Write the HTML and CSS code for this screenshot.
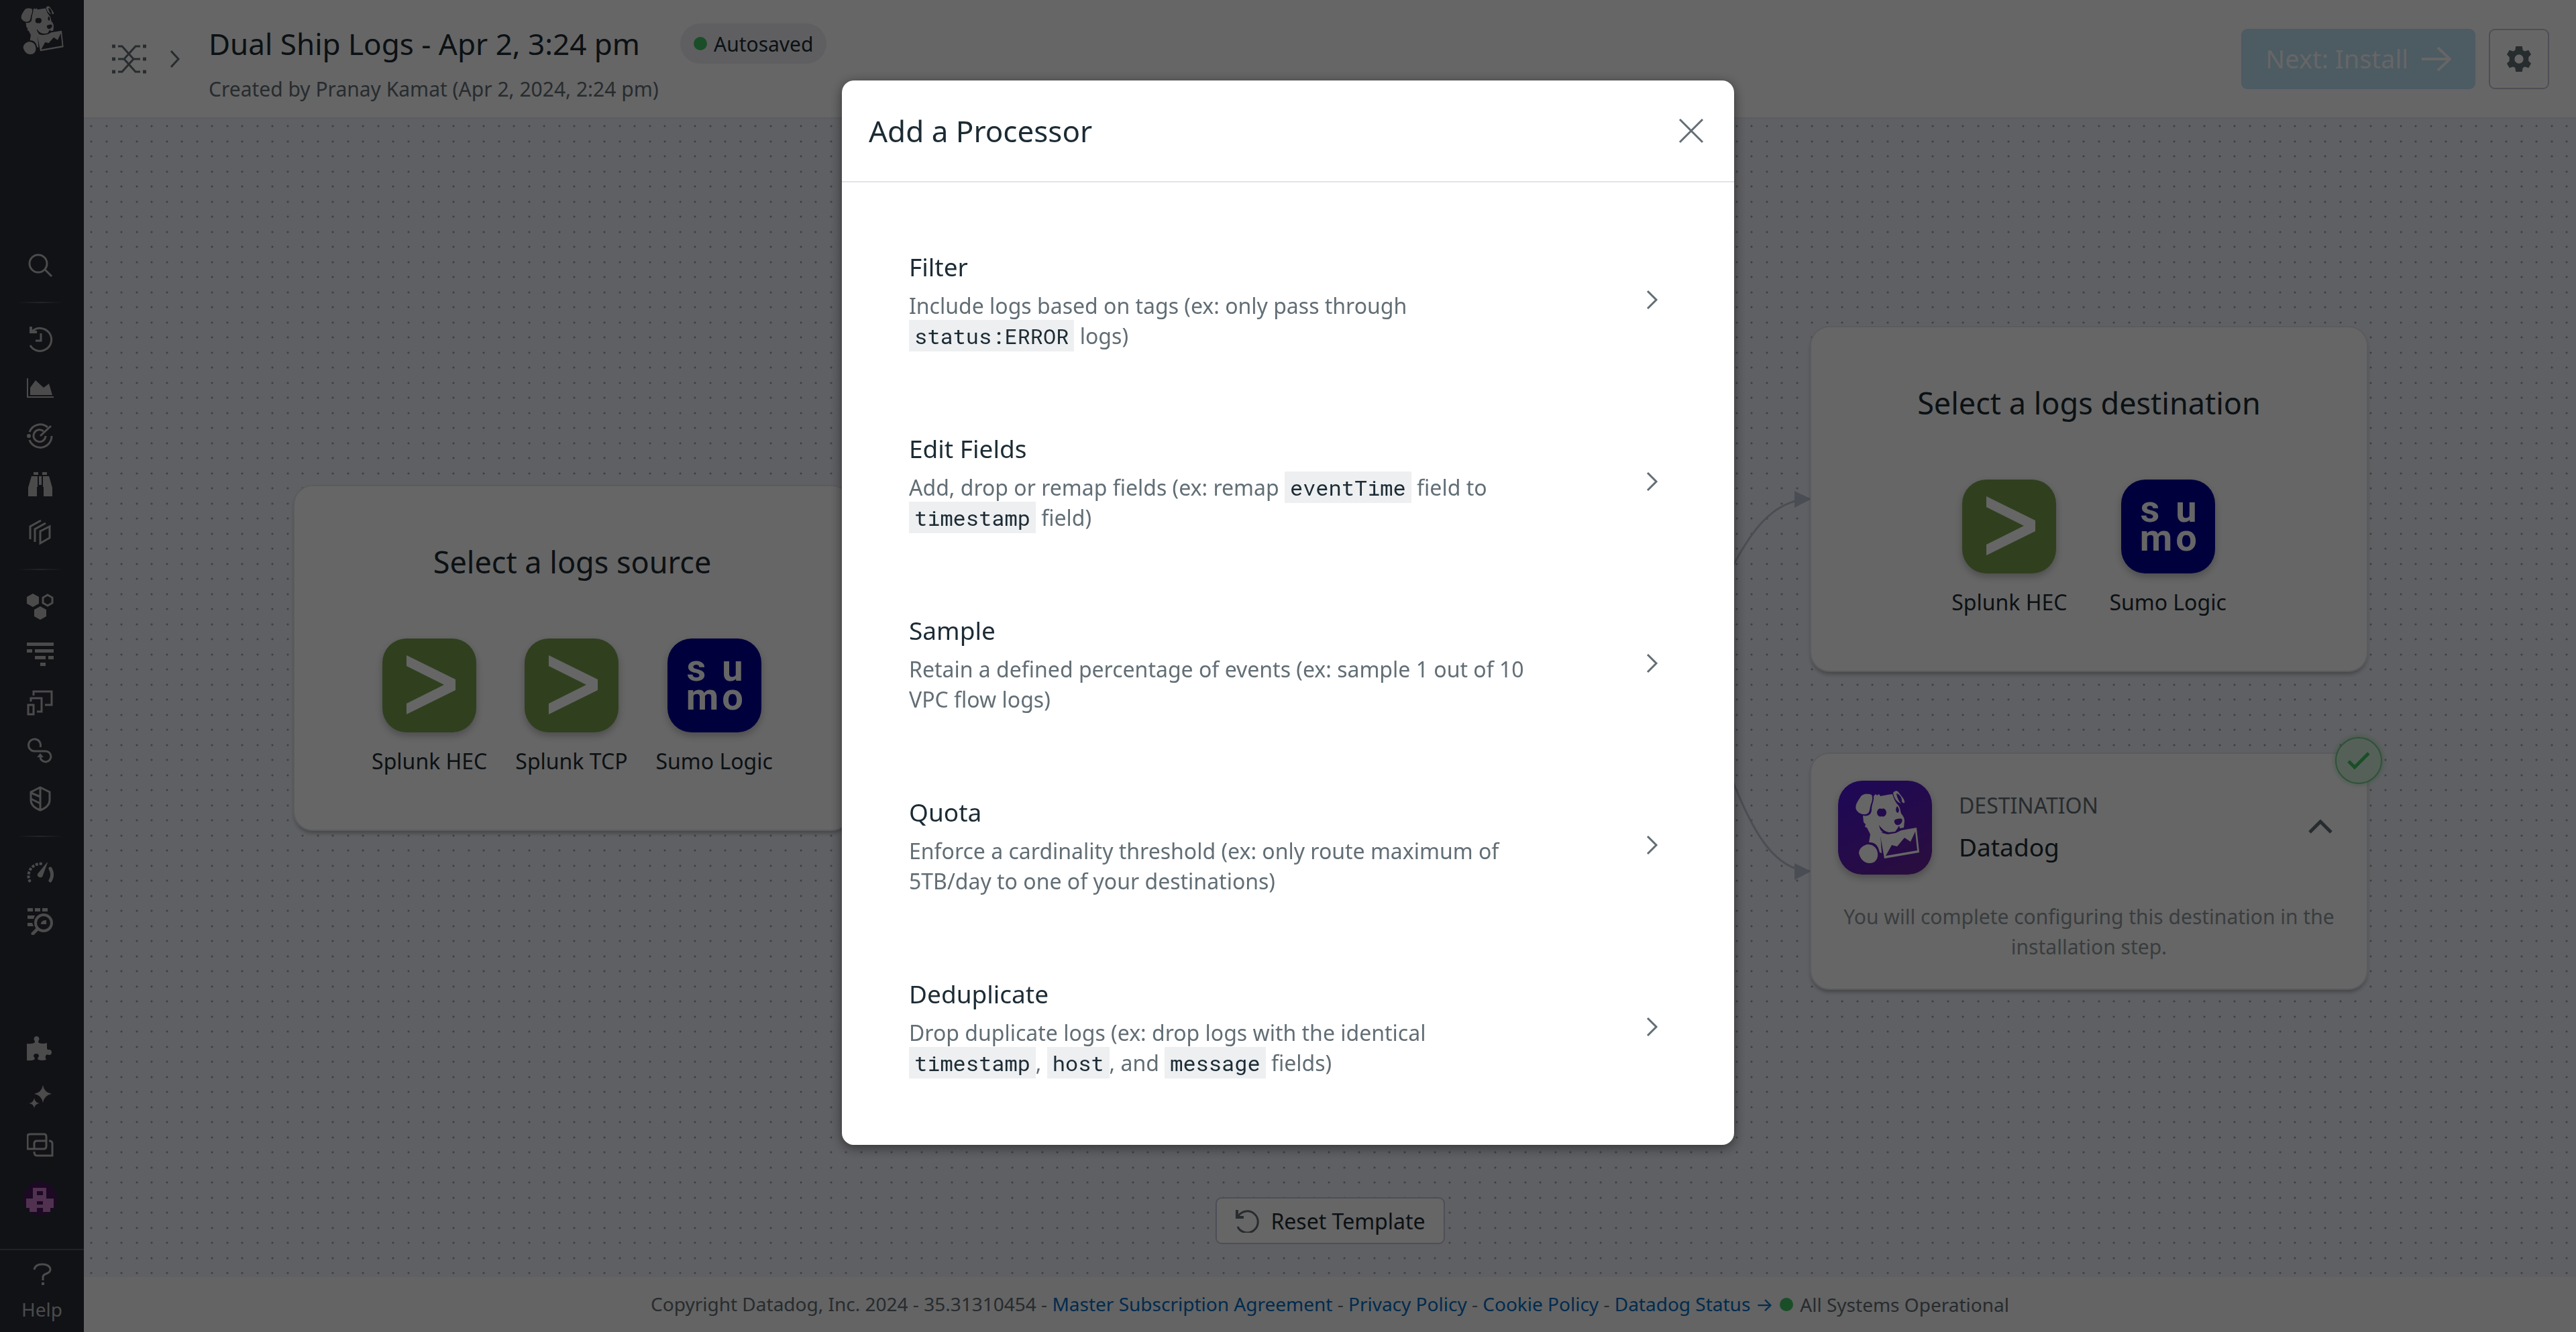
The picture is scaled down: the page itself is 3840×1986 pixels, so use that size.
FILE: index.html
```html
<!DOCTYPE html>
<html lang="en">

<head>
    <meta charset="UTF-8">
    <meta name="viewport" content="width=device-width, initial-scale=1.0">
    <title>Dual Ship Logs</title>
    <link rel="stylesheet" href="styles.css">
</head>

<body>

    <!-- shared shapes -->
    <svg class="defs" aria-hidden="true">
        <symbol id="dog" viewBox="26 15 95 108">
            <path d="M50 21 C44 19 36 19 33 25 C28 32 25 38 27 43 C30 49 38 52 44 49 C48 46 47 40 49 35 C51 30 52 25 50 21 Z" />
            <path fill-rule="evenodd" d="M53 23 L56 20 L58 22 L61 20 L63 23 L74 21 L81 20 C83 27 86 33 90 37 C93 41 93 46 94 49 C97 52 99 56 99 60 L98 70 L92 71 L91 67 L88 72 L85 76 L76 77 C70 76 65 72 61 66 C62 72 64 75 67 77 L63 78 L65 108 L62 107 C60 96 54 91 46 92 L48 80 L43 70 L40 69 L41 65 L38 62 L37 52 C46 54 50 49 50 43 C50 35 54 30 53 23 Z M65 42 A5 6 0 1 0 65 53 A5 6 0 1 0 65 42 Z M88 38 C85 42 86 47 89 48 C92 46 91 41 88 38 Z M84 59 C83 63 86 67 90 66 C94 65 97 60 95 57 C91 56 86 57 84 59 Z" />
            <path d="M82 18 C84 15 88 14 90 17 C94 23 100 28 99 33 C97 34 96 32 95 31 C96 25 90 19 87 19 C88 26 91 31 94 34 C87 32 83 25 82 18 Z" />
            <path d="M43 95 C36 97 31 102 31 108 C33 116 38 123 47 123 C56 123 60 116 59 108 C58 100 52 94 43 95 Z" />
            <path fill-rule="evenodd" d="M62 77 L74 80 L86 78 L94 74 L117 70 L121 107 L69 116 Z M71 112 L80 96 L88 98 L99 85 L108 91 L115 76 L118 104 Z" />
        </symbol>
        <symbol id="splunk" viewBox="0 0 140 140">
            <path fill="#fff" d="M36 25 L109 61 V77 L36 113 V97 L92 69 L36 41 Z" />
        </symbol>
        <symbol id="chevron" viewBox="0 0 36 36">
            <path d="M7 5 L20 18 L7 31" fill="none" stroke="currentColor" stroke-width="3" />
        </symbol>
    </svg>

    <div class="app">

        <nav class="sidebar">
            <a href="#" class="logo" aria-label="Home"><svg><use href="#dog" /></svg></a>

            <div class="navTop">
                <a href="#" aria-label="Search"><svg viewBox="0 0 40 40"><circle cx="17" cy="17" r="13" fill="none" stroke="currentColor" stroke-width="3" /><path class="line" d="M27 26 L37 36" /></svg></a>
                <hr>
                <a href="#" aria-label="Recent"><svg viewBox="0 0 40 40"><path class="line" d="M5 29 A17 17 0 1 0 8 8" /><path class="line" d="M6 1 V9 H15" stroke-width="4" /><path class="line" d="M21 11 V22 H13" /></svg></a>
                <a href="#" aria-label="Dashboards"><svg viewBox="0 0 40 40"><path class="line" d="M1 6 V34 H40" stroke-width="2" /><path d="M5 31 V20 L13 9 L25 20 L33 14 L38 31 Z" /></svg></a>
                <a href="#" aria-label="Monitors"><svg viewBox="0 0 40 40"><circle cx="3" cy="20" r="3" /><path class="line" d="M4 14 A17 17 0 0 1 31 7 M37 20 A17 17 0 0 1 4 26 M28 20 A9 9 0 1 1 25 13 M20 20 L36 5" /></svg></a>
                <a href="#" aria-label="Watchdog"><svg viewBox="0 0 40 40"><path d="M10 2 H17 V6 H10 Z M23 2 H30 V6 H23 Z M18 8 H22 V21 H18 Z M7 8 H16 V24 H15 V38 H2 V25 Z M24 8 H33 L38 25 V38 H25 V24 H24 Z" /></svg></a>
                <a href="#" aria-label="Service catalog"><svg viewBox="0 0 40 40"><path class="line" d="M5 30 V11 L21 2 M12 34 V15 L28 6 M20 18 L34 11 V28 L20 36 Z" /></svg></a>
                <hr>
                <a href="#" aria-label="Infrastructure"><svg viewBox="0 0 40 40"><path d="M9 1 L18 6 V16 L9 21 L0 16 V6 Z M20 20 L29 25 V35 L20 40 L11 35 V25 Z" /><path class="line" d="M31 3 L38 7 V15 L31 19 L24 15 V7 Z" /></svg></a>
                <a href="#" aria-label="APM"><svg viewBox="0 0 40 40"><path d="M0 2 H40 V7 H0 Z M0 12 H8 V17 H0 Z M12 12 H40 V17 H12 Z M12 22 H28 V27 H12 Z M32 22 H40 V27 H32 Z M20 32 H28 V37 H20 Z" /></svg></a>
                <a href="#" aria-label="Digital experience"><svg viewBox="0 0 40 40"><path class="line" d="M10 9 V3 H37 V23 H27 M6 18 V13 H22 V33 H15 M2 23 H10 V37 H2 Z" /></svg></a>
                <a href="#" aria-label="CI"><svg viewBox="0 0 40 40"><path class="line" d="M20 14 A9 9 0 1 0 11 20 H28 A8 8 0 1 1 20 29" /><path d="M15 29 L20 23 L25 29 Z" /></svg></a>
                <a href="#" aria-label="Security"><svg viewBox="0 0 40 40"><path class="line" d="M20 2 L34 9 V21 C34 29 28 33 20 36 C12 33 6 29 6 21 V9 Z M20 2 V36 M6 10 L20 16 M6 19 L20 26" /></svg></a>
                <hr>
                <a href="#" aria-label="Metrics"><svg viewBox="0 0 40 40"><path class="line" d="M5 33 A18 18 0 0 1 23 6" stroke-width="4" stroke-dasharray="4 2" /><path d="M31 4 L24 23 A4 4 0 0 1 16 21 L30 4 Z" /><path class="line" d="M35 13 C39 20 38 26 35 31" stroke-width="5" stroke-linecap="round" /></svg></a>
                <a href="#" aria-label="Logs"><svg viewBox="0 0 40 40"><path d="M1 0 H9 V5 H1 Z M12 0 H20 V5 H12 Z M23 0 H31 V5 H23 Z M1 11 H12 L10 16 H1 Z M1 22 H8 L10 27 H1 Z M21 24 C21 19 25 18 29 18 V24 Z" /><circle cx="25" cy="22" r="12" fill="none" stroke="currentColor" stroke-width="4" /><path class="line" d="M16 31 L9 38" stroke-width="5" stroke-linecap="round" /></svg></a>
            </div>

            <div class="navBottom">
                <a href="#" aria-label="Integrations"><svg viewBox="0 0 40 40"><path d="M0 13 Q6 14 11 12 Q13 10 11 8 A4 4 0 1 1 18 8 Q16 10 18 12 Q24 14 30 12 V19 Q30 23 33 22 A4 4 0 1 1 33 30 Q30 28 28 31 Q27 34 29 37 Q23 39 17 37 Q15 35 18 32 A4 4 0 1 0 10 32 Q13 35 11 37 Q6 39 0 38 Z" /></svg></a>
                <a href="#" aria-label="Bits AI"><svg viewBox="0 0 40 40"><path d="M24 3 Q26 14 37 16 Q26 18 24 29 Q22 18 11 16 Q22 14 24 3 Z M11 22 Q12 29 19 30 Q12 31 11 37 Q10 31 3 30 Q10 29 11 22 Z" /></svg></a>
                <a href="#" aria-label="Workspaces"><svg viewBox="0 0 40 40"><path class="line" d="M1 26 V7 Q1 4 5 4 H26 Q29 4 29 8 V22 Q29 26 25 26 Z M11 26 V18 Q11 14 15 14 H29 M33 14 Q38 14 38 18 V36 H15 Q11 36 11 30" /></svg></a>
                <a href="#" class="avatar" aria-label="Account"><svg viewBox="0 0 50 50"><circle cx="25" cy="25" r="25" fill="#48185a" /><path fill="#c97ac5" fill-rule="evenodd" d="M14 9 H34 V25 H45 V39 H40 V45 H29 V39 H20 V45 H9 V39 H4 V25 H14 Z M20 14 V20 H29 V14 Z M20 29 V34 H29 V29 Z" /></svg></a>
            </div>

            <a href="#" class="help">
                <svg viewBox="0 0 32 36"><path class="line" d="M4 11 C5 5 10 3 16 3 C23 3 28 6 28 11 C28 18 17 16 17 22 V27" /><path d="M15 30 H19 V34 H15 Z" /></svg>
                Help
            </a>
        </nav>

        <div class="main">

            <header class="topbar">
                <svg class="pipelineIcon" viewBox="0 0 54 44"><g fill="none" stroke="currentColor" stroke-width="5"><path d="M2 3 H7 M48 3 H53 M2 22 H7 M48 22 H53 M2 41 H7 M48 41 H53" /><path stroke-width="3" d="M11 3 H17 L34 22 H44 M11 22 H20 L37 3 H44 M11 41 H17 L34 22 M20 22 L37 41 H44" /></g></svg>
                <svg class="crumb" viewBox="0 0 15 26"><path d="M2 1 L13 13 L2 25" fill="none" stroke="currentColor" stroke-width="3" /></svg>
                <div class="heading">
                    <div class="titleRow">
                        <h1>Dual Ship Logs - Apr 2, 3:24 pm</h1>
                        <span class="pill"><span class="dot"></span>Autosaved</span>
                    </div>
                    <p>Created by Pranay Kamat (Apr 2, 2024, 2:24 pm)</p>
                </div>
                <button type="button" class="next" disabled>Next: Install
                    <svg viewBox="0 0 44 36"><path d="M0 18 H42 M24 1 L42 18 L24 35" fill="none" stroke="currentColor" stroke-width="4" /></svg>
                </button>
                <button type="button" class="gear" aria-label="Settings">
                    <svg viewBox="0 0 40 42"><path fill-rule="evenodd" d="M15 1 H25 L26 7 L29 9 L35 7 L39 14 L35 18 V24 L39 28 L35 35 L29 33 L26 35 L25 41 H15 L14 35 L11 33 L5 35 L1 28 L5 24 V18 L1 14 L5 7 L11 9 L14 7 Z M20 14 A7 7 0 1 0 20 28 A7 7 0 1 0 20 14 Z" /></svg>
                </button>
            </header>

            <main class="canvas">
                <svg class="edges">
                    <path d="M2321 804 C2448 804 2448 567 2575 567" />
                    <path d="M2321 804 C2448 804 2448 1122 2575 1122" />
                    <path class="arrow" d="M2550 555 L2575 567 L2550 580 Z M2550 1110 L2575 1122 L2550 1135 Z" />
                </svg>

                <section class="node source">
                    <h2>Select a logs source</h2>
                    <div class="options">
                        <button type="button"><svg class="tile splunk"><use href="#splunk" /></svg>Splunk HEC</button>
                        <button type="button"><svg class="tile splunk"><use href="#splunk" /></svg>Splunk TCP</button>
                        <button type="button"><svg class="tile sumo" viewBox="0 0 140 140"><text x="43" y="63">s</text><text x="97" y="63">u</text><text x="52" y="106">m</text><text x="97" y="106">o</text></svg>Sumo Logic</button>
                    </div>
                </section>

                <section class="node destination">
                    <h2>Select a logs destination</h2>
                    <div class="options wide">
                        <button type="button"><svg class="tile splunk"><use href="#splunk" /></svg>Splunk HEC</button>
                        <button type="button"><svg class="tile sumo" viewBox="0 0 140 140"><text x="43" y="63">s</text><text x="97" y="63">u</text><text x="52" y="106">m</text><text x="97" y="106">o</text></svg>Sumo Logic</button>
                    </div>
                </section>

                <section class="node datadog">
                    <div class="nodeHead">
                        <svg class="tile purple" viewBox="0 0 140 140"><use href="#dog" x="26" y="15" width="95" height="108" /></svg>
                        <div class="nodeName">
                            <span class="kind">DESTINATION</span>
                            <span class="name">Datadog</span>
                        </div>
                        <button type="button" class="collapse" aria-label="Collapse"><svg viewBox="0 0 36 24"><path d="M2 19 L18 3 L34 19" fill="none" stroke="currentColor" stroke-width="5" /></svg></button>
                    </div>
                    <p>You will complete configuring this destination in the installation step.</p>
                    <span class="check"><svg viewBox="0 0 36 28"><path d="M3 15 L12 24 L33 3" fill="none" stroke="currentColor" stroke-width="5" /></svg></span>
                </section>

                <button type="button" class="reset">
                    <svg viewBox="0 0 36 36"><path d="M4 27 A16 16 0 1 0 5 11" fill="none" stroke="currentColor" stroke-width="3" /><path d="M3 2 V13 H13" fill="none" stroke="currentColor" stroke-width="4" /></svg>
                    Reset Template
                </button>
            </main>

            <footer class="footer">
                <span>Copyright Datadog, Inc. 2024 - 35.31310454 - <a href="#">Master Subscription Agreement</a> - <a href="#">Privacy Policy</a> - <a href="#">Cookie Policy</a> - <a href="#">Datadog Status <span class="arrowText">→</span></a></span>
                <span class="dot"></span>
                <span>All Systems Operational</span>
            </footer>
        </div>
    </div>

    <div class="overlay">
        <div class="modal" role="dialog" aria-modal="true" aria-labelledby="modalTitle">
            <div class="modalHead">
                <h2 id="modalTitle">Add a Processor</h2>
                <button type="button" aria-label="Close"><svg viewBox="0 0 48 48"><path d="M7 7 L41 41 M41 7 L7 41" fill="none" stroke="currentColor" stroke-width="3" /></svg></button>
            </div>
            <div class="modalBody">
                <button type="button" class="processor">
                    <span class="info">
                        <span class="label">Filter</span>
                        <span class="desc">Include logs based on tags (ex: only pass through <code>status:ERROR</code> logs)</span>
                    </span>
                    <svg><use href="#chevron" /></svg>
                </button>
                <button type="button" class="processor">
                    <span class="info">
                        <span class="label">Edit Fields</span>
                        <span class="desc">Add, drop or remap fields (ex: remap <code>eventTime</code> field to <code>timestamp</code> field)</span>
                    </span>
                    <svg><use href="#chevron" /></svg>
                </button>
                <button type="button" class="processor">
                    <span class="info">
                        <span class="label">Sample</span>
                        <span class="desc">Retain a defined percentage of events (ex: sample 1 out of 10 VPC flow logs)</span>
                    </span>
                    <svg><use href="#chevron" /></svg>
                </button>
                <button type="button" class="processor">
                    <span class="info">
                        <span class="label">Quota</span>
                        <span class="desc">Enforce a cardinality threshold (ex: only route maximum of 5TB/day to one of your destinations)</span>
                    </span>
                    <svg><use href="#chevron" /></svg>
                </button>
                <button type="button" class="processor">
                    <span class="info">
                        <span class="label">Deduplicate</span>
                        <span class="desc">Drop duplicate logs (ex: drop logs with the identical <code>timestamp</code>, <code>host</code>, and <code>message</code> fields)</span>
                    </span>
                    <svg><use href="#chevron" /></svg>
                </button>
            </div>
        </div>
    </div>

</body>

</html>
```
FILE: styles.css
```css
* {
    box-sizing: border-box;
    margin: 0;
    padding: 0;
}

body {
    font-family: "Noto Sans", "Open Sans", sans-serif;
    font-size: 32px;
    line-height: 45px;
    color: #1c2b34;
    overflow: hidden;
}

button {
    font: inherit;
    color: inherit;
    background: none;
    border: none;
    cursor: pointer;
}

a {
    color: #006bc2;
    text-decoration: none;
}

h1,
h2 {
    font-size: 44px;
    line-height: 54px;
    font-weight: 400;
}

svg {
    display: block;
    flex: none;
    fill: currentColor;
}

.line {
    fill: none;
    stroke: currentColor;
    stroke-width: 3px;
}

.line[stroke-width="2"] {
    stroke-width: 2px;
}

.line[stroke-width="4"] {
    stroke-width: 4px;
}

.line[stroke-width="5"] {
    stroke-width: 5px;
}

.defs {
    display: none;
}

.dot {
    width: 20px;
    height: 20px;
    border-radius: 50%;
    background: #41c464;
}

.app {
    display: flex;
    height: 100vh;
}


/* sidebar */

.sidebar {
    width: 125px;
    display: flex;
    flex-direction: column;
    background: #2b2d37;
}

.sidebar a {
    color: #bcbcbc;
}

.logo {
    height: 360px;
    padding: 9px 0 0 31px;
}

.logo svg {
    width: 64px;
    height: 72px;
}

.navTop,
.navBottom {
    display: flex;
    flex-direction: column;
    padding-right: 5px;
}

.navTop a,
.navBottom a {
    height: 72px;
    display: flex;
    align-items: center;
    justify-content: center;
}

.navTop svg,
.navBottom svg {
    width: 40px;
    height: 40px;
}

.navTop hr {
    width: 70px;
    height: 2px;
    margin: 18px auto;
    border: none;
    background: linear-gradient(90deg, transparent, #5c5c60, transparent);
}

.navBottom {
    margin-top: auto;
    padding-bottom: 39px;
}

.navBottom .avatar {
    margin-top: 8px;
}

.navBottom .avatar svg {
    width: 50px;
    height: 50px;
}

.help {
    height: 124px;
    padding-top: 18px;
    border-top: 2px solid #54565e;
    display: flex;
    flex-direction: column;
    align-items: center;
    gap: 12px;
    font-size: 28px;
}

.help svg {
    width: 32px;
    height: 36px;
}


/* top bar */

.main {
    flex: 1;
    min-width: 0;
    display: flex;
    flex-direction: column;
}

.topbar {
    height: 177px;
    padding: 0 40px;
    display: flex;
    align-items: center;
    background: #fff;
    border-bottom: 2px solid #e4e5ee;
    color: #626e75;
}

.pipelineIcon {
    width: 54px;
    height: 44px;
}

.crumb {
    width: 15px;
    height: 26px;
    margin: 0 43px 0 34px;
}

.heading {
    flex: 1;
    padding-top: 15px;
    font-size: 30px;
}

.titleRow {
    display: flex;
    align-items: center;
    gap: 60px;
    margin-bottom: 15px;
    color: #1c2b34;
}

.pill {
    height: 60px;
    padding: 0 20px;
    display: flex;
    align-items: center;
    gap: 10px;
    border-radius: 30px;
    background: #ededf3;
}

.next {
    height: 90px;
    padding: 0 36px;
    display: flex;
    align-items: center;
    gap: 20px;
    border-radius: 9px;
    background: #c0e3f7;
    color: #fff;
    font-size: 38px;
}

.next svg {
    width: 44px;
    height: 36px;
}

.gear {
    width: 90px;
    height: 90px;
    margin-left: 20px;
    display: flex;
    align-items: center;
    justify-content: center;
    border: 2px solid #c0c4d8;
    border-radius: 9px;
}

.gear svg {
    width: 38px;
    height: 40px;
}


/* canvas */

.canvas {
    flex: 1;
    position: relative;
    background-color: #eef0f8;
    background-image:
        radial-gradient(circle at 11px 11px, #9ea1a8 1px, transparent 2px),
        radial-gradient(circle at 34px 11px, #9ea1a8 1px, transparent 2px),
        radial-gradient(circle at 11px 34px, #9ea1a8 1px, transparent 2px),
        radial-gradient(circle at 34px 34px, #9ea1a8 1px, transparent 2px);
    background-size: 45px 45px;
}

.edges {
    position: absolute;
    inset: 0;
    width: 100%;
    height: 100%;
    fill: none;
    stroke: #bcc0d4;
    stroke-width: 3px;
}

.edges .arrow {
    fill: #bcc0d4;
    stroke: none;
}

.node {
    position: absolute;
    width: 828px;
    border-radius: 27px;
    background: #fff;
    box-shadow: 0 0 0 2px #e2e4ec, 0 5px 6px rgba(0, 0, 0, 0.3);
    text-align: center;
}

.node h2 {
    font-size: 45px;
}

.source {
    left: 314px;
    top: 548px;
}

.destination {
    left: 2575px;
    top: 311px;
}

.source,
.destination {
    padding: 86px 0 80px;
}

.options {
    margin-top: 87px;
    display: flex;
    justify-content: center;
    gap: 42px;
}

.options.wide {
    gap: 63px;
}

.options button {
    display: flex;
    flex-direction: column;
    align-items: center;
    gap: 20px;
}

.tile {
    width: 140px;
    height: 140px;
    border-radius: 36px;
    box-shadow: 0 5px 12px rgba(0, 0, 0, 0.25);
    color: #fff;
}

.splunk {
    background: #78a04e;
}

.sumo {
    background: #000099;
    font-family: Roboto, Arial, sans-serif;
    font-size: 56px;
    font-weight: 700;
    text-anchor: middle;
}

.purple {
    background: linear-gradient(150deg, #4c14dc, #6a2498);
}

.datadog {
    left: 2575px;
    top: 947px;
    padding: 40px;
}

.nodeHead {
    display: flex;
    align-items: center;
    gap: 40px;
    margin-bottom: 40px;
    text-align: left;
}

.nodeName {
    flex: 1;
    display: flex;
    flex-direction: column;
    gap: 13px;
}

.kind {
    color: #626e75;
}

.name {
    font-size: 37px;
    line-height: 54px;
}

.collapse {
    padding-right: 11px;
    color: #626e75;
}

.collapse svg {
    width: 36px;
    height: 24px;
}

.datadog p {
    color: #8f989d;
    font-size: 30px;
}

.check {
    position: absolute;
    top: -25px;
    right: -23px;
    width: 70px;
    height: 70px;
    display: flex;
    align-items: center;
    justify-content: center;
    border: 2px solid #76cc8c;
    border-radius: 50%;
    background: #d5f3dc;
    box-shadow: 0 0 8px rgba(65, 196, 100, 0.5);
    color: #41c464;
}

.check svg {
    width: 36px;
    height: 28px;
}

.reset {
    position: absolute;
    bottom: 49px;
    left: 50%;
    transform: translateX(-50%);
    height: 70px;
    padding: 0 27px;
    display: flex;
    align-items: center;
    gap: 18px;
    border: 2px solid #c0c4d8;
    border-radius: 9px;
    background: #fff;
    white-space: nowrap;
}

.reset svg {
    width: 36px;
    height: 36px;
    color: #626e75;
}

.footer {
    height: 82px;
    display: flex;
    align-items: center;
    justify-content: center;
    gap: 10px;
    background: #f9f9f9;
    color: #626e75;
    font-size: 28px;
}

.arrowText {
    font-family: Inter, sans-serif;
}


/* modal */

.overlay {
    position: fixed;
    inset: 0;
    padding-top: 120px;
    display: flex;
    justify-content: center;
    align-items: flex-start;
    background: rgba(0, 0, 0, 0.6);
}

.modal {
    width: 1330px;
    border-radius: 18px;
    background: #fff;
    box-shadow: 0 4px 18px rgba(0, 0, 0, 0.5);
}

.modalHead {
    height: 152px;
    padding: 0 40px;
    display: flex;
    align-items: center;
    justify-content: space-between;
    border-bottom: 2px solid #e1e3ec;
}

.modalHead svg {
    width: 48px;
    height: 48px;
    color: #626e75;
}

.modalBody {
    padding: 40px;
}

.processor {
    width: 100%;
    padding: 59px 60px 60px;
    display: flex;
    align-items: center;
    justify-content: space-between;
    text-align: left;
}

.info {
    width: 960px;
    display: flex;
    flex-direction: column;
    gap: 8px;
}

.label {
    font-size: 37px;
    line-height: 54px;
}

.desc {
    color: #626e75;
}

.desc code {
    padding: 2px 8px;
    background: #edeff1;
    color: #1c2b34;
    font-family: "Roboto Mono", "DejaVu Sans Mono", monospace;
    line-height: 1;
}

.processor svg {
    width: 36px;
    height: 36px;
    color: #626e75;
}
```
